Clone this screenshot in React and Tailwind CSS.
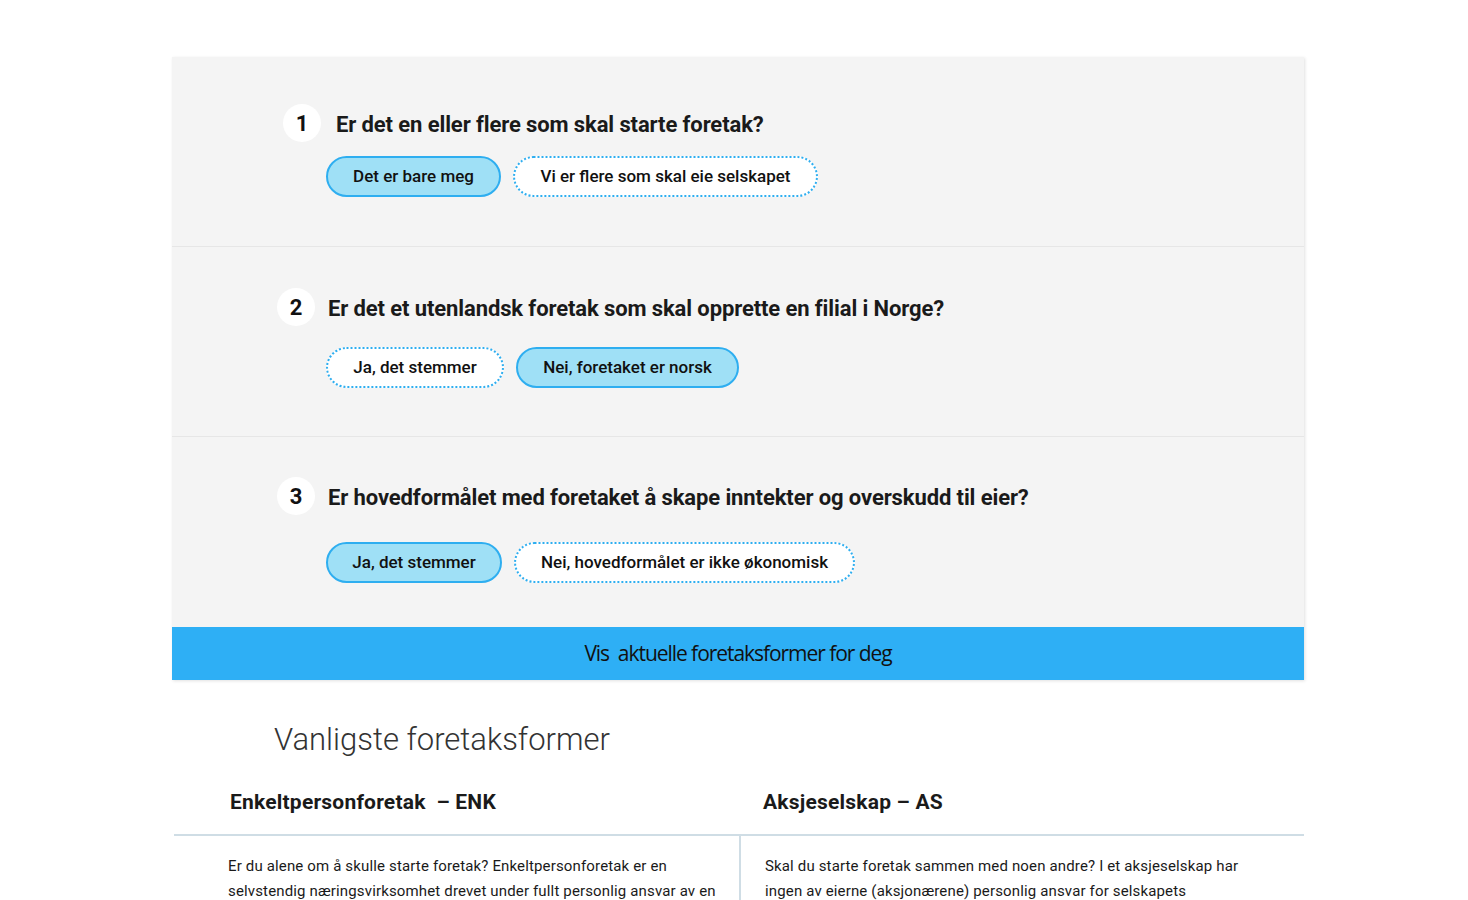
import { useState } from 'react';

const questions = [
    {
        id: 1,
        title: 'Er det en eller flere som skal starte foretak?',
        options: [
            { label: 'Det er bare meg', width: 'w-[175px]' },
            { label: 'Vi er flere som skal eie selskapet', width: 'w-[305px]' },
        ],
        selected: 0,
        pad: 'pt-[47px]',
        circle: 'ml-[111px]',
        gapTitle: 'ml-[15px]',
        btnTop: 'mt-[14px]',
    },
    {
        id: 2,
        title: 'Er det et utenlandsk foretak som skal opprette en filial i Norge?',
        options: [
            { label: 'Ja, det stemmer', width: 'w-[178px]' },
            { label: 'Nei, foretaket er norsk', width: 'w-[223px]' },
        ],
        selected: 1,
        pad: 'pt-[41px]',
        circle: 'ml-[105px]',
        gapTitle: 'ml-[13px]',
        btnTop: 'mt-[21px]',
    },
    {
        id: 3,
        title: 'Er hovedformålet med foretaket å skape inntekter og overskudd til eier?',
        options: [
            { label: 'Ja, det stemmer', width: 'w-[176px]' },
            { label: 'Nei, hovedformålet er ikke økonomisk', width: 'w-[341px]' },
        ],
        selected: 0,
        pad: 'pt-[40px]',
        circle: 'ml-[105px]',
        gapTitle: 'ml-[13px]',
        btnTop: 'mt-[27px]',
    },
];

function Question({ q, selected, onSelect, last }) {
    return (
        <div className={`h-[190px] ${q.pad} ${last ? '' : 'border-b border-[#e6e6e6]'}`}>
            <div className="flex items-center">
                <div className={`${q.circle} w-[38px] h-[38px] rounded-full bg-white flex items-center justify-center text-[22px] font-bold text-[#111]`}>
                    {q.id}
                </div>
                <h3 className={`${q.gapTitle} text-[22px] font-bold text-[#1a1a1a] tracking-[-0.005em] leading-[30px] mt-[4px]`}>
                    {q.title}
                </h3>
            </div>
            <div className={`${q.btnTop} ml-[154px] flex gap-3`}>
                {q.options.map((opt, i) => {
                    const active = selected === i;
                    return (
                        <button
                            key={i}
                            onClick={() => onSelect(i)}
                            className={`${opt.width} h-[41px] rounded-full border-2 text-[17px] font-medium text-[#111] ${active
                                ? 'bg-[#9fe0f6] border-solid border-[#2eaef0]'
                                : 'bg-white border-dotted border-[#2eaef0]'
                                }`}
                        >
                            {opt.label}
                        </button>
                    );
                })}
            </div>
        </div>
    );
}

export default function App() {
    const [answers, setAnswers] = useState(questions.map((q) => q.selected));

    const setAnswer = (index, value) => {
        setAnswers((prev) => prev.map((a, i) => (i === index ? value : a)));
    };

    return (
        <div className="min-h-screen bg-white font-['Roboto',sans-serif] text-[#1a1a1a]">
            <div className="w-[1132px] ml-[172px] pt-[57px]">
                <div className="bg-[#f4f4f4] shadow-[1px_1px_3px_rgba(0,0,0,0.12)]">
                    {questions.map((q, idx) => (
                        <Question
                            key={q.id}
                            q={q}
                            selected={answers[idx]}
                            onSelect={(v) => setAnswer(idx, v)}
                            last={idx === questions.length - 1}
                        />
                    ))}
                    <button className="w-full h-[53px] bg-[#2eaff5] text-[21px] text-[#111] font-['Open_Sans',sans-serif] tracking-[-0.05em] flex items-center justify-center">
                        Vis&nbsp; aktuelle foretaksformer for deg
                    </button>
                </div>

                <h2 className="mt-[42px] ml-[102px] text-[31px] font-light text-[#333] leading-[36px]">
                    Vanligste foretaksformer
                </h2>

                <div className="mt-[30px] ml-[2px] grid grid-cols-2">
                    <div className="h-[48px] pl-[56px] pt-[2px] border-b-2 border-[#cfdde5] text-[21px] leading-[24px] font-bold tracking-[0.01em]">
                        Enkeltpersonforetak &nbsp;– ENK
                    </div>
                    <div className="h-[48px] pl-[24px] pt-[2px] border-b-2 border-[#cfdde5] text-[21px] leading-[24px] font-bold tracking-[0.01em]">
                        Aksjeselskap – AS
                    </div>
                    <div className="pl-[54px] pr-[20px] pt-[18px] text-[15px] leading-[25px] text-[#1a1a1a] tracking-[0.01em]">
                        Er du alene om å skulle starte foretak? Enkeltpersonforetak er en selvstendig næringsvirksomhet drevet under fullt personlig ansvar av en fysisk person.
                    </div>
                    <div className="border-l-2 border-[#cfdde5] pl-[24px] pr-[60px] pt-[18px] text-[15px] leading-[25px] text-[#1a1a1a] tracking-[0.01em]">
                        Skal du starte foretak sammen med noen andre? I et aksjeselskap har ingen av eierne (aksjonærene) personlig ansvar for selskapets forpliktelser.
                    </div>
                </div>
            </div>
        </div>
    );
}
